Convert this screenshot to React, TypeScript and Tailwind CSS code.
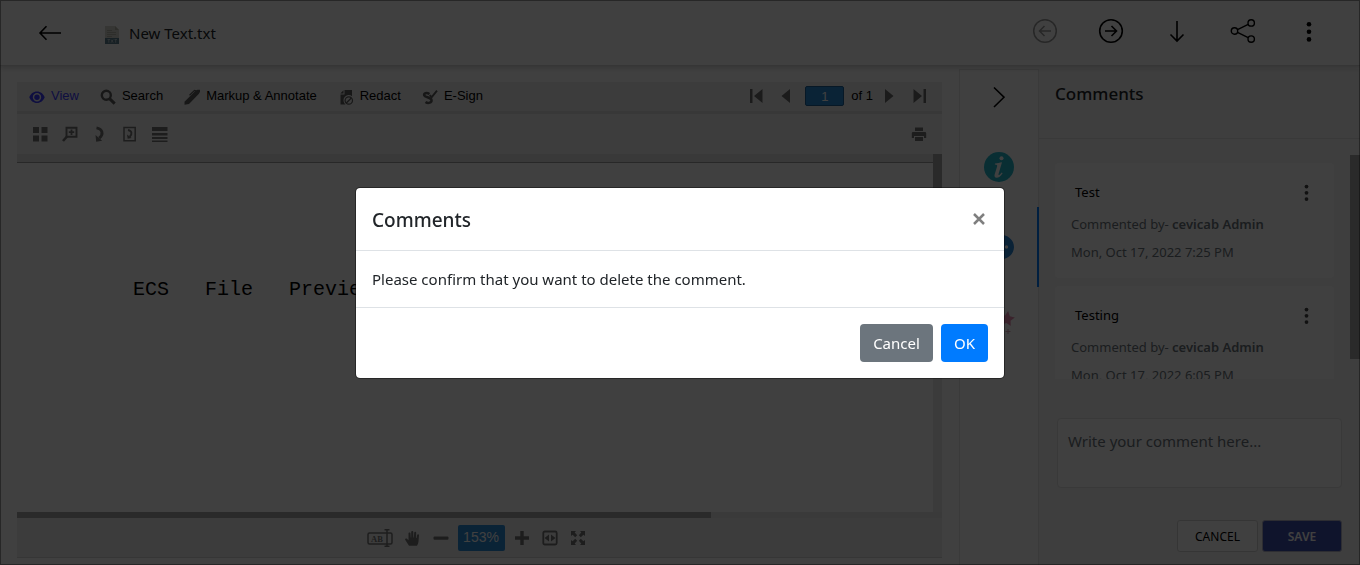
import React from "react";

type IconProps = { className?: string; children: React.ReactNode; box?: string };

function Icon({ className = "size-4", box = "0 0 16 16", children }: IconProps) {
  return (
    <svg viewBox={box} className={`shrink-0 ${className}`} fill="currentColor" aria-hidden="true">
      {children}
    </svg>
  );
}

const stroke = { fill: "none", stroke: "currentColor" } as const;

function Dots({ className }: { className: string }) {
  return (
    <Icon box="0 0 6 22" className={className}>
      <circle cx="3" cy="3.2" r="2.3" />
      <circle cx="3" cy="10.8" r="2.3" />
      <circle cx="3" cy="18.4" r="2.3" />
    </Icon>
  );
}

function Header() {
  return (
    <header className="relative z-10 flex h-[66px] shrink-0 items-center border-b border-[#d8d8d8] bg-white pr-[18px] pl-[38px] shadow-[0_2px_5px_rgba(0,0,0,0.18)]">
      <button aria-label="Back" className="text-black">
        <Icon box="0 0 24 16" className="h-4 w-6">
          <path {...stroke} strokeWidth="1.6" d="M23 8H2M8.5 1.2 2 8l6.500 6.800" />
        </Icon>
      </button>
      <Icon box="0 0 14 18" className="mt-1 ml-[43px] h-[18px] w-[14px]">
        <path fill="#d8d8ce" d="M0 0h10l4 4v14H0z" />
        <path fill="#b8b8aa" d="M10 0v4h4z" />
        <path stroke="#b8b8aa" strokeWidth="1" d="M2 4.500h5M2 6.500h9M2 8.500h9M2 10.500h5" />
        <path fill="#5e8090" d="M0 12h14v6H0z" />
        <path {...stroke} stroke="#b8c8ce" strokeWidth="0.9" d="M2.500 13.500h2.500M3.800 13.500v3.200M6 13.500l2.200 3.200M8.200 13.500 6 16.700M9.500 13.500H12M10.700 13.500v3.200" />
      </Icon>
      <span className="mt-0.5 ml-2.5 text-[15px] text-[#212529]">New Text.txt</span>
      <div className="ml-auto flex pb-1 text-black">
        <button aria-label="Previous file" disabled className="flex w-[66px] justify-center text-[#9a9a9a]">
          <Icon box="0 0 26 26" className="size-[26px]">
            <g {...stroke} strokeWidth="1.5">
              <circle cx="13" cy="13" r="11.300" />
              <path d="M19 13H7.500M12.500 8l-5 5 5 5" />
            </g>
          </Icon>
        </button>
        <button aria-label="Next file" className="flex w-[66px] justify-center">
          <Icon box="0 0 26 26" className="size-[26px]">
            <g {...stroke} strokeWidth="1.600">
              <circle cx="13" cy="13" r="11.300" />
              <path d="M7 13h11.500M13.500 8l5 5-5 5" />
            </g>
          </Icon>
        </button>
        <button aria-label="Download" className="flex w-[66px] justify-center">
          <Icon box="0 0 26 26" className="size-[26px]">
            <path {...stroke} strokeWidth="1.600" d="M13 3v20M6.500 16.500l6.500 6.500 6.500-6.500" />
          </Icon>
        </button>
        <button aria-label="Share" className="flex w-[66px] justify-center">
          <Icon box="0 0 26 26" className="size-[26px]">
            <g {...stroke} strokeWidth="1.400">
              <circle cx="4.500" cy="13" r="3.200" />
              <circle cx="21.200" cy="4.900" r="3.200" />
              <circle cx="21.200" cy="21.100" r="3.200" />
              <path d="M7.500 11.700 18.200 6.400M7.500 14.300l10.700 5.300" />
            </g>
          </Icon>
        </button>
        <button aria-label="More" className="flex w-[66px] items-center justify-center pt-0.5">
          <Dots className="h-[22px] w-1.5" />
        </button>
      </div>
    </header>
  );
}

const tabs = [
  {
    name: "View",
    color: "text-[#3d3dff]",
    icon: (
      <>
        <path fillRule="evenodd" d="M8 2.500c-3.800 0-6.400 2.400-7.700 5.700C1.600 11.500 4.200 14 8 14s6.400-2.500 7.700-5.800C14.400 4.900 11.800 2.500 8 2.500zM8 4a4.200 4.200 0 1 1 0 8.400A4.200 4.200 0 0 1 8 4z" />
        <circle cx="8" cy="8.200" r="2.700" />
      </>
    ),
  },
  {
    name: "Search",
    color: "text-black",
    icon: (
      <g className="text-[#5c5c5c]">
        <circle {...stroke} strokeWidth="2.400" cx="6.300" cy="6.300" r="4.500" />
        <path {...stroke} strokeWidth="3" d="m9.500 9.600 5.200 5" />
      </g>
    ),
  },
  {
    name: "Markup & Annotate",
    color: "text-black",
    icon: (
      <g className="text-[#5c5c5c]">
        <path d="M.5 15.800v-3L11 2.200c1.500-1.400 3-1.700 5-1.400.2 1.700-.2 3-1.300 4.200L5 15z" />
        <path {...stroke} strokeWidth="1.200" d="m5.500 6.200 5-4.800 1.500.4" />
      </g>
    ),
  },
  {
    name: "Redact",
    color: "text-black",
    icon: (
      <g className="text-[#5c5c5c]">
        <path d="M6.500 1H14v6.200a5 5 0 0 0-6.500 8.300H2.500V5.500h4zM5.500 1.200v3.300H2.300z" />
        <circle {...stroke} strokeWidth="1.200" cx="10.800" cy="11.500" r="3.700" />
        <path {...stroke} strokeWidth="1.200" d="m8.300 14 5-5" />
      </g>
    ),
  },
  {
    name: "E-Sign",
    color: "text-black",
    icon: (
      <g className="text-[#5c5c5c]">
        <path {...stroke} strokeWidth="2.500" d="M7.500 5C4.500 3.300 1.500 4.300 2.200 6.300s6.800 2 7.300 4.600-3.300 4-6 2" />
        <path {...stroke} strokeWidth="1.900" d="m7.800 6 1.700 2.400L15 1.700" />
      </g>
    ),
  },
];

const viewTools = [
  { name: "Thumbnails", icon: <path d="M1 1h6v6H1zM9.500 1h6v6h-6zM1 9.500h6v6H1zM9.500 9.500h6v6h-6z" /> },
  {
    name: "Zoom area",
    icon: (
      <>
        <path {...stroke} strokeWidth="1.900" d="M4.500 1.700h10v9h-10z" />
        <path {...stroke} strokeWidth="1.800" d="M9.500 3.500v5.400M6.800 6.200h5.400" />
        <path {...stroke} strokeWidth="2.600" d="m5 10.500-4 4.500" />
      </>
    ),
  },
  {
    name: "Rotate page",
    icon: (
      <>
        <path {...stroke} strokeWidth="2.900" d="M4.500 1.900c6 1 7.500 6.500 2.700 10.200" />
        <path d="m3.500 9 .7 6.700 6-1z" />
      </>
    ),
  },
  {
    name: "Rotate document",
    icon: (
      <>
        <path {...stroke} strokeWidth="1.500" d="M2 1.500h11.200v13.200H2z" />
        <path {...stroke} strokeWidth="1.900" d="M6 4c4 .8 4.500 4 1.700 6.800" />
        <path d="m5 8.500.7 4.200 4-.8z" />
      </>
    ),
  },
  { name: "Page layout", icon: <path d="M0 1h15.500v4H0zM0 7h15.500v2.500H0zM0 11h15.500v2H0zM0 14.500h15.500V16H0z" /> },
];

function DocumentViewer() {
  return (
    <section className="flex min-w-0 flex-1 flex-col pt-4 pr-[17px] pb-[7px] pl-[17px]">
      <div className="flex h-8 shrink-0 items-center border-b-3 border-[#e0e0e0] bg-[#f0f0f0] pr-4 pl-3 font-['Liberation_Sans',sans-serif] text-[13px]">
        <nav className="flex gap-[21px]">
          {tabs.map((t) => (
            <button key={t.name} className={`flex items-center gap-1.5 whitespace-nowrap ${t.color}`}>
              <Icon>{t.icon}</Icon>
              <span className="pb-0.5 leading-4">{t.name}</span>
            </button>
          ))}
        </nav>
        <div className="ml-auto flex items-center pb-px text-[#6c6c6c]">
          <button aria-label="First page">
            <Icon box="0 0 13 16" className="h-4 w-[13px]">
              <path d="M0 1h2.500v14H0zM12.500 1v14L4 8z" />
            </Icon>
          </button>
          <button aria-label="Previous page" className="ml-[18px]">
            <Icon box="0 0 9 16" className="h-4 w-[9px]">
              <path d="M9 1v14L0.500 8z" />
            </Icon>
          </button>
          <input aria-label="Page number" defaultValue="1" className="ml-[15px] h-5 w-[39px] rounded-xs border border-[#1c6098] bg-[#2a8ad8] text-center text-white" />
          <span className="ml-[7px] pb-px text-black">of 1</span>
          <button aria-label="Next page" className="ml-3">
            <Icon box="0 0 9 16" className="h-4 w-[9px]">
              <path d="M0 1v14l8.500-7z" />
            </Icon>
          </button>
          <button aria-label="Last page" className="ml-[19px]">
            <Icon box="0 0 13 16" className="h-4 w-[13px]">
              <path d="M10.500 1H13v14h-2.500zM.5 1v14L9 8z" />
            </Icon>
          </button>
        </div>
      </div>
      <div className="flex h-10 shrink-0 items-center justify-between bg-[#f3f3f3] px-[15px] text-[#747474]">
        <div className="flex gap-3.5">
          {viewTools.map((t) => (
            <button key={t.name} aria-label={t.name}>
              <Icon>{t.icon}</Icon>
            </button>
          ))}
        </div>
        <button aria-label="Print">
          <Icon>
            <path d="M4 1.500h8V5H4zM2 6h12q1.200 0 1.200 1.200V12H13v-2H3v2H.8V7.200Q.8 6 2 6zM4 11h8v4H4z" />
          </Icon>
        </button>
      </div>
      <div className="flex min-h-0 flex-1">
        <div className="min-w-0 flex-1 overflow-hidden border-t-8 border-[#e2e2e2] bg-white">
          <pre className="border-t border-[#a0a0a0] pt-[115px] pl-[116px] font-['Liberation_Mono',monospace] text-[20px] leading-6 text-black">
            ECS   File   Preview
          </pre>
        </div>
        <div className="w-[9px] bg-[#ececec]">
          <div className="h-[220px] bg-[#a8a8a8]" />
        </div>
      </div>
      <div className="h-1.5 shrink-0 bg-[#e8e8e8]">
        <div className="h-full w-3/4 bg-[#a8a8a8]" />
      </div>
      <div className="flex h-10 shrink-0 items-center justify-center gap-3 border-b border-[#d8d8d8] bg-[#f0f0f0] pr-[7px] text-[#747474]">
        <button aria-label="Select text">
          <svg viewBox="0 0 26 18" className="h-[18px] w-[26px]" fill="currentColor">
            <rect {...stroke} x="1" y="4" width="24" height="11" rx="1.500" strokeWidth="1.500" />
            <text x="4" y="12.500" fontSize="8.500" fontWeight="bold" fontFamily="Liberation Serif, serif">AB</text>
            <path {...stroke} strokeWidth="1.500" d="M20 1v16M17.500.8h5M17.500 17.200h5" />
          </svg>
        </button>
        <button aria-label="Pan">
          <Icon>
            <path d="M4 15.800 .3 10c-.7-1.200.8-2 1.700-1.200L3.500 10.200V3.500c0-1.400 1.900-1.400 2 0L5.800 7.500h.4V2c0-1.500 2.100-1.500 2.100 0v5.500h.5L9.200 2.700c.1-1.400 2-1.300 2 .1L11.100 8h.5l.5-3c.2-1.300 2-1.100 1.900.3L13.500 11.500c-.2 2-.8 3-1.500 4.300z" />
          </Icon>
        </button>
        <div className="flex items-center gap-[9px]">
          <button aria-label="Zoom out">
            <Icon>
              <rect x="0.500" y="6.500" width="15" height="3.200" rx="1" />
            </Icon>
          </button>
          <button className="h-[26px] w-[47px] rounded-xs bg-[#2a8ad8] font-['Liberation_Sans',sans-serif] text-[14px] text-white">153%</button>
          <button aria-label="Zoom in">
            <Icon>
              <path d="M6.300 1h3.400v5.300H15v3.400H9.700V15H6.300V9.700H1V6.300h5.300z" />
            </Icon>
          </button>
        </div>
        <button aria-label="Fit width">
          <Icon>
            <rect {...stroke} strokeWidth="1.800" x="1.300" y="1.500" width="13.400" height="13" rx="1.500" />
            <path d="M2.500 8 7 4.500v7zM13.500 8 9 4.500v7z" />
          </Icon>
        </button>
        <button aria-label="Full screen">
          <Icon>
            <path d="M1 1h5L4.700 2.600l2.500 2.600-2 2-2.600-2.500L1 6zM15 1v5l-1.600-1.300-2.600 2.500-2-2 2.500-2.600L10 1zM1 15v-5l1.600 1.300 2.600-2.500 2 2-2.500 2.600L6 15zM15 15h-5l1.300-1.600-2.500-2.600 2-2 2.600 2.500L15 10z" />
          </Icon>
        </button>
      </div>
    </section>
  );
}

function Rail() {
  return (
    <aside className="mt-[3px] flex w-20 shrink-0 flex-col border-x border-t border-[#e6e6e6] bg-white">
      <button aria-label="Collapse" className="flex h-[57px] items-center justify-center pb-1 text-black">
        <Icon box="0 0 12 22" className="h-[22px] w-3">
          <path {...stroke} strokeWidth="1.600" d="m1 1.500 10 9.700L1 21" />
        </Icon>
      </button>
      <button aria-label="Details" className="flex h-20 items-center justify-center">
        <Icon box="0 0 30 30" className="size-[30px]">
          <circle cx="15" cy="15" r="15" fill="#26b8cc" />
          <circle cx="17.500" cy="6.300" r="2" fill="#fff" />
          <path fill="#fff" d="M11 11.600c2.600-.2 4.700-.9 7-1.300l-3.400 11.400c-.3 1.200.1 1.800 1 1.100l2.200-2.300.8.7c-2 3-4 4.500-6 4.500-1.800 0-2.500-1.300-1.900-3.400l2.400-7.900c.3-1.300-.1-1.700-2.300-1.800z" />
        </Icon>
      </button>
      <button aria-label="Comments" className="-mr-px flex h-20 items-center justify-center border-r-2 border-[#007bff]">
        <Icon box="0 0 30 30" className="size-[30px]">
          <path fill="#2a86d8" d="M15 2.500c9 0 15 5.500 15 12.500s-6 12.500-15 12.500l-9 1 1-4C2.500 22.500 0 19 0 15 0 8 6 2.500 15 2.500z" />
          <g fill="#fff">
            <circle cx="8" cy="15" r="1.700" />
            <circle cx="15" cy="15" r="1.700" />
            <circle cx="22.500" cy="15" r="1.700" />
          </g>
        </Icon>
      </button>
      <button aria-label="Favorites" className="flex h-20 items-center justify-center">
        <Icon box="0 0 32 32" className="size-8">
          <path fill="#e58cb0" transform="rotate(8 24 8)" d="m24 0 2.400 4.800 5.200.7-3.800 3.700.9 5.300L24 12l-4.700 2.500.9-5.300-3.800-3.700 5.200-.7z" />
          <path {...stroke} stroke="#d9a8b8" strokeWidth="1" d="M25 18v5M22.500 20.500h5M4 28l10-12" />
        </Icon>
      </button>
    </aside>
  );
}

const comments = [
  { text: "Test", author: "cevicab Admin", date: "Mon, Oct 17, 2022 7:25 PM" },
  { text: "Testing", author: "cevicab Admin", date: "Mon, Oct 17, 2022 6:05 PM" },
];

function CommentsPanel() {
  return (
    <aside className="mt-[3px] flex w-[321px] shrink-0 flex-col bg-[#f6f6f6]">
      <h2 className="h-[70px] shrink-0 border-b border-[#e2e2e2] pt-3 pl-4 text-[17px] leading-[26px] font-medium text-[#212529]">Comments</h2>
      <div className="mt-4 flex min-h-0 flex-1">
        <div className="flex flex-1 flex-col gap-2 overflow-hidden px-4 pt-2">
          {comments.map((c) => (
            <article key={c.text} className="h-[115px] shrink-0 rounded bg-white px-4 pt-[15px] text-[13px] leading-7 text-[#6c757d]">
              <div className="flex h-8 items-center justify-between pr-[9px] pb-1 pl-1 text-black">
                <p>{c.text}</p>
                <button aria-label={`Options for ${c.text}`} className="pt-0.5 text-[#444]">
                  <Dots className="h-[18px] w-[5px]" />
                </button>
              </div>
              <p>
                Commented by- <strong className="font-semibold">{c.author}</strong>
              </p>
              <p>{c.date}</p>
            </article>
          ))}
        </div>
        <div className="w-2.5">
          <div className="h-[204px] bg-[#a8a8a8]" />
        </div>
      </div>
      <form className="mt-[39px] flex shrink-0 flex-col px-[18px] pb-[13px]" onSubmit={(e) => e.preventDefault()}>
        <textarea
          aria-label="Write your comment here"
          placeholder="Write your comment here..."
          className="block h-[70px] resize-none rounded border border-[#e2e2e2] bg-white px-2.5 py-[11px] text-[15px] leading-[22px] placeholder:text-[#6c757d]"
        />
        <div className="mt-8 flex justify-end gap-1">
          <button type="button" className="h-8 w-[81px] rounded-[3px] border border-[#d4d4d4] bg-white pt-0.5 text-[12px] text-black">CANCEL</button>
          <button type="submit" className="h-8 w-20 rounded-[3px] border border-[#b4b4c8] bg-[#3f4fb0] pt-0.5 text-[12px] font-semibold text-white">SAVE</button>
        </div>
      </form>
    </aside>
  );
}

function ConfirmDialog() {
  return (
    <div className="fixed inset-0 z-50 flex items-center justify-center border border-black/40 bg-black/75">
      <div role="dialog" aria-modal="true" aria-labelledby="dialog-title" className="w-full max-w-[650px] rounded-[5px] border border-black/40 bg-white bg-clip-padding">
        <div className="flex items-center justify-between border-b border-[#dee2e6] p-4">
          <h1 id="dialog-title" className="pt-0.5 text-[19px] leading-7 font-medium text-[#212529]">Comments</h1>
          <button aria-label="Close" className="flex size-[18px] items-center justify-center text-[#7f7f7f]">
            <Icon box="0 0 12 12" className="size-3">
              <path {...stroke} strokeWidth="2.500" d="m1 1 10 10M11 1 1 11" />
            </Icon>
          </button>
        </div>
        <p className="p-4 text-[15px] leading-6 text-[#212529]">Please confirm that you want to delete the comment.</p>
        <div className="flex justify-end gap-2 border-t border-[#dee2e6] p-4 text-[15px] leading-6 text-white">
          <button className="h-[38px] w-[73px] rounded bg-[#6c757d]">Cancel</button>
          <button className="h-[38px] w-[47px] rounded bg-[#007bff]">OK</button>
        </div>
      </div>
    </div>
  );
}

export default function App() {
  return (
    <div className="flex h-screen min-h-[500px] flex-col bg-white font-['Noto_Sans',sans-serif]">
      <Header />
      <main className="flex min-h-0 flex-1">
        <DocumentViewer />
        <Rail />
        <CommentsPanel />
      </main>
      <ConfirmDialog />
    </div>
  );
}
